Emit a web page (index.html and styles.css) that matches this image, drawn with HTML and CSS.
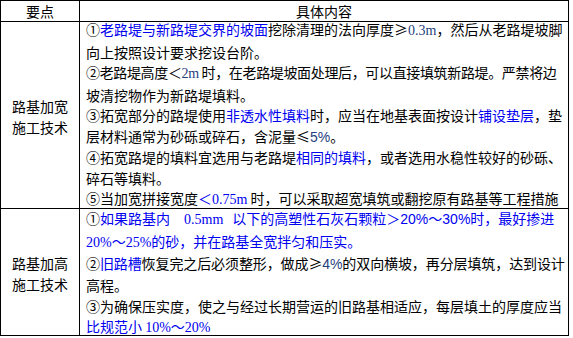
FILE: index.html
```html
<!DOCTYPE html>
<html lang="zh-CN">
<head>
<meta charset="utf-8">
<title>路基加宽与加高施工技术</title>
<link rel="stylesheet" href="styles.css">
</head>
<body>
<div class="sheet">
  <div class="cell head">要点</div>
  <div class="cell head">具体内容</div>

  <div class="cell label"><span>路基加宽</span><span>施工技术</span></div>
  <div class="cell body body-wide">
    <div class="ln">①<span class="b">老路堤与新路堤交界的坡面</span>挖除清理的法向厚度≥<span class="num dk">0.3m</span>，然后从老路堤坡脚</div>
    <div class="ln">向上按照设计要求挖设台阶。</div>
    <div class="ln tight">②老路堤高度＜<span class="num dk">2m</span> 时，在老路堤坡面处理后，可以直接填筑新路堤。严禁将边</div>
    <div class="ln">坡清挖物作为新路堤填料。</div>
    <div class="ln">③拓宽部分的路堤使用<span class="b">非透水性填料</span>时，应当在地基表面按设计<span class="b">铺设垫层</span>，垫</div>
    <div class="ln">层材料通常为砂砾或碎石，含泥量≤<span class="pct dk">5%</span>。</div>
    <div class="ln">④拓宽路堤的填料宜选用与老路堤<span class="b">相同的填料</span>，或者选用水稳性较好的砂砾、</div>
    <div class="ln">碎石等填料。</div>
    <div class="ln">⑤当加宽拼接宽度<span class="b">＜<span class="num">0.75m</span></span> 时，可以采取超宽填筑或翻挖原有路基等工程措施</div>
  </div>

  <div class="cell label"><span>路基加高</span><span>施工技术</span></div>
  <div class="cell body body-high">
    <div class="ln">①<span class="b">如果路基内<span class="num gap-l">0.5mm</span><span class="gap-r"></span>以下的高塑性石灰石颗粒＞<span class="pct">20%</span>～<span class="pct">30%</span>时，最好掺进</span></div>
    <div class="ln"><span class="b"><span class="num">20%</span>～<span class="num">25%</span>的砂，并在路基全宽拌匀和压实。</span></div>
    <div class="ln snug">②<span class="b">旧路槽</span>恢复完之后必须整形，做成≥<span class="pct dk">4%</span>的双向横坡，再分层填筑，达到设计</div>
    <div class="ln">高程。</div>
    <div class="ln">③为确保压实度，使之与经过长期营运的旧路基相适应，每层填土的厚度应当</div>
    <div class="ln"><span class="b">比规范小 <span class="num">10%</span>～<span class="num">20%</span></span></div>
  </div>
</div>
</body>
</html>
```

FILE: styles.css
```css
html, body {
  margin: 0;
  padding: 0;
  background: #fff;
}

body {
  font-family: "Noto Sans CJK SC", "Noto Sans", sans-serif;
  font-size: 14px;
  color: #000;
}

.sheet {
  display: grid;
  grid-template-columns: 79px 489px;
  grid-template-rows: 21px 187px 127px;
  width: 568px;
  border-left: 1px solid #000;
  border-top: 1px solid #000;
}

.cell {
  border-right: 1px solid #000;
  border-bottom: 1px solid #000;
}

.head {
  display: flex;
  align-items: center;
  justify-content: center;
  line-height: 20px;
}

.label {
  display: flex;
  flex-direction: column;
  align-items: center;
  justify-content: center;
  line-height: 20.6px;
  padding-top: 4px;
}

.body {
  display: flex;
  flex-direction: column;
  justify-content: center;
  padding-left: 6px;
  white-space: nowrap;
}

.body-wide {
  line-height: 20.5px;
}

.body-high {
  line-height: 20.6px;
  padding-top: 3px;
}

.tight {
  letter-spacing: -0.35px;
}

.snug {
  letter-spacing: -0.1px;
}

.b {
  color: #0000f0;
}

.dk {
  color: #1f3f7d;
}

.num {
  font-family: "Liberation Serif", serif;
}

.pct {
  font-family: "Liberation Sans", sans-serif;
}

.gap-l {
  margin-left: 14px;
}

.gap-r {
  display: inline-block;
  width: 9px;
}
```
